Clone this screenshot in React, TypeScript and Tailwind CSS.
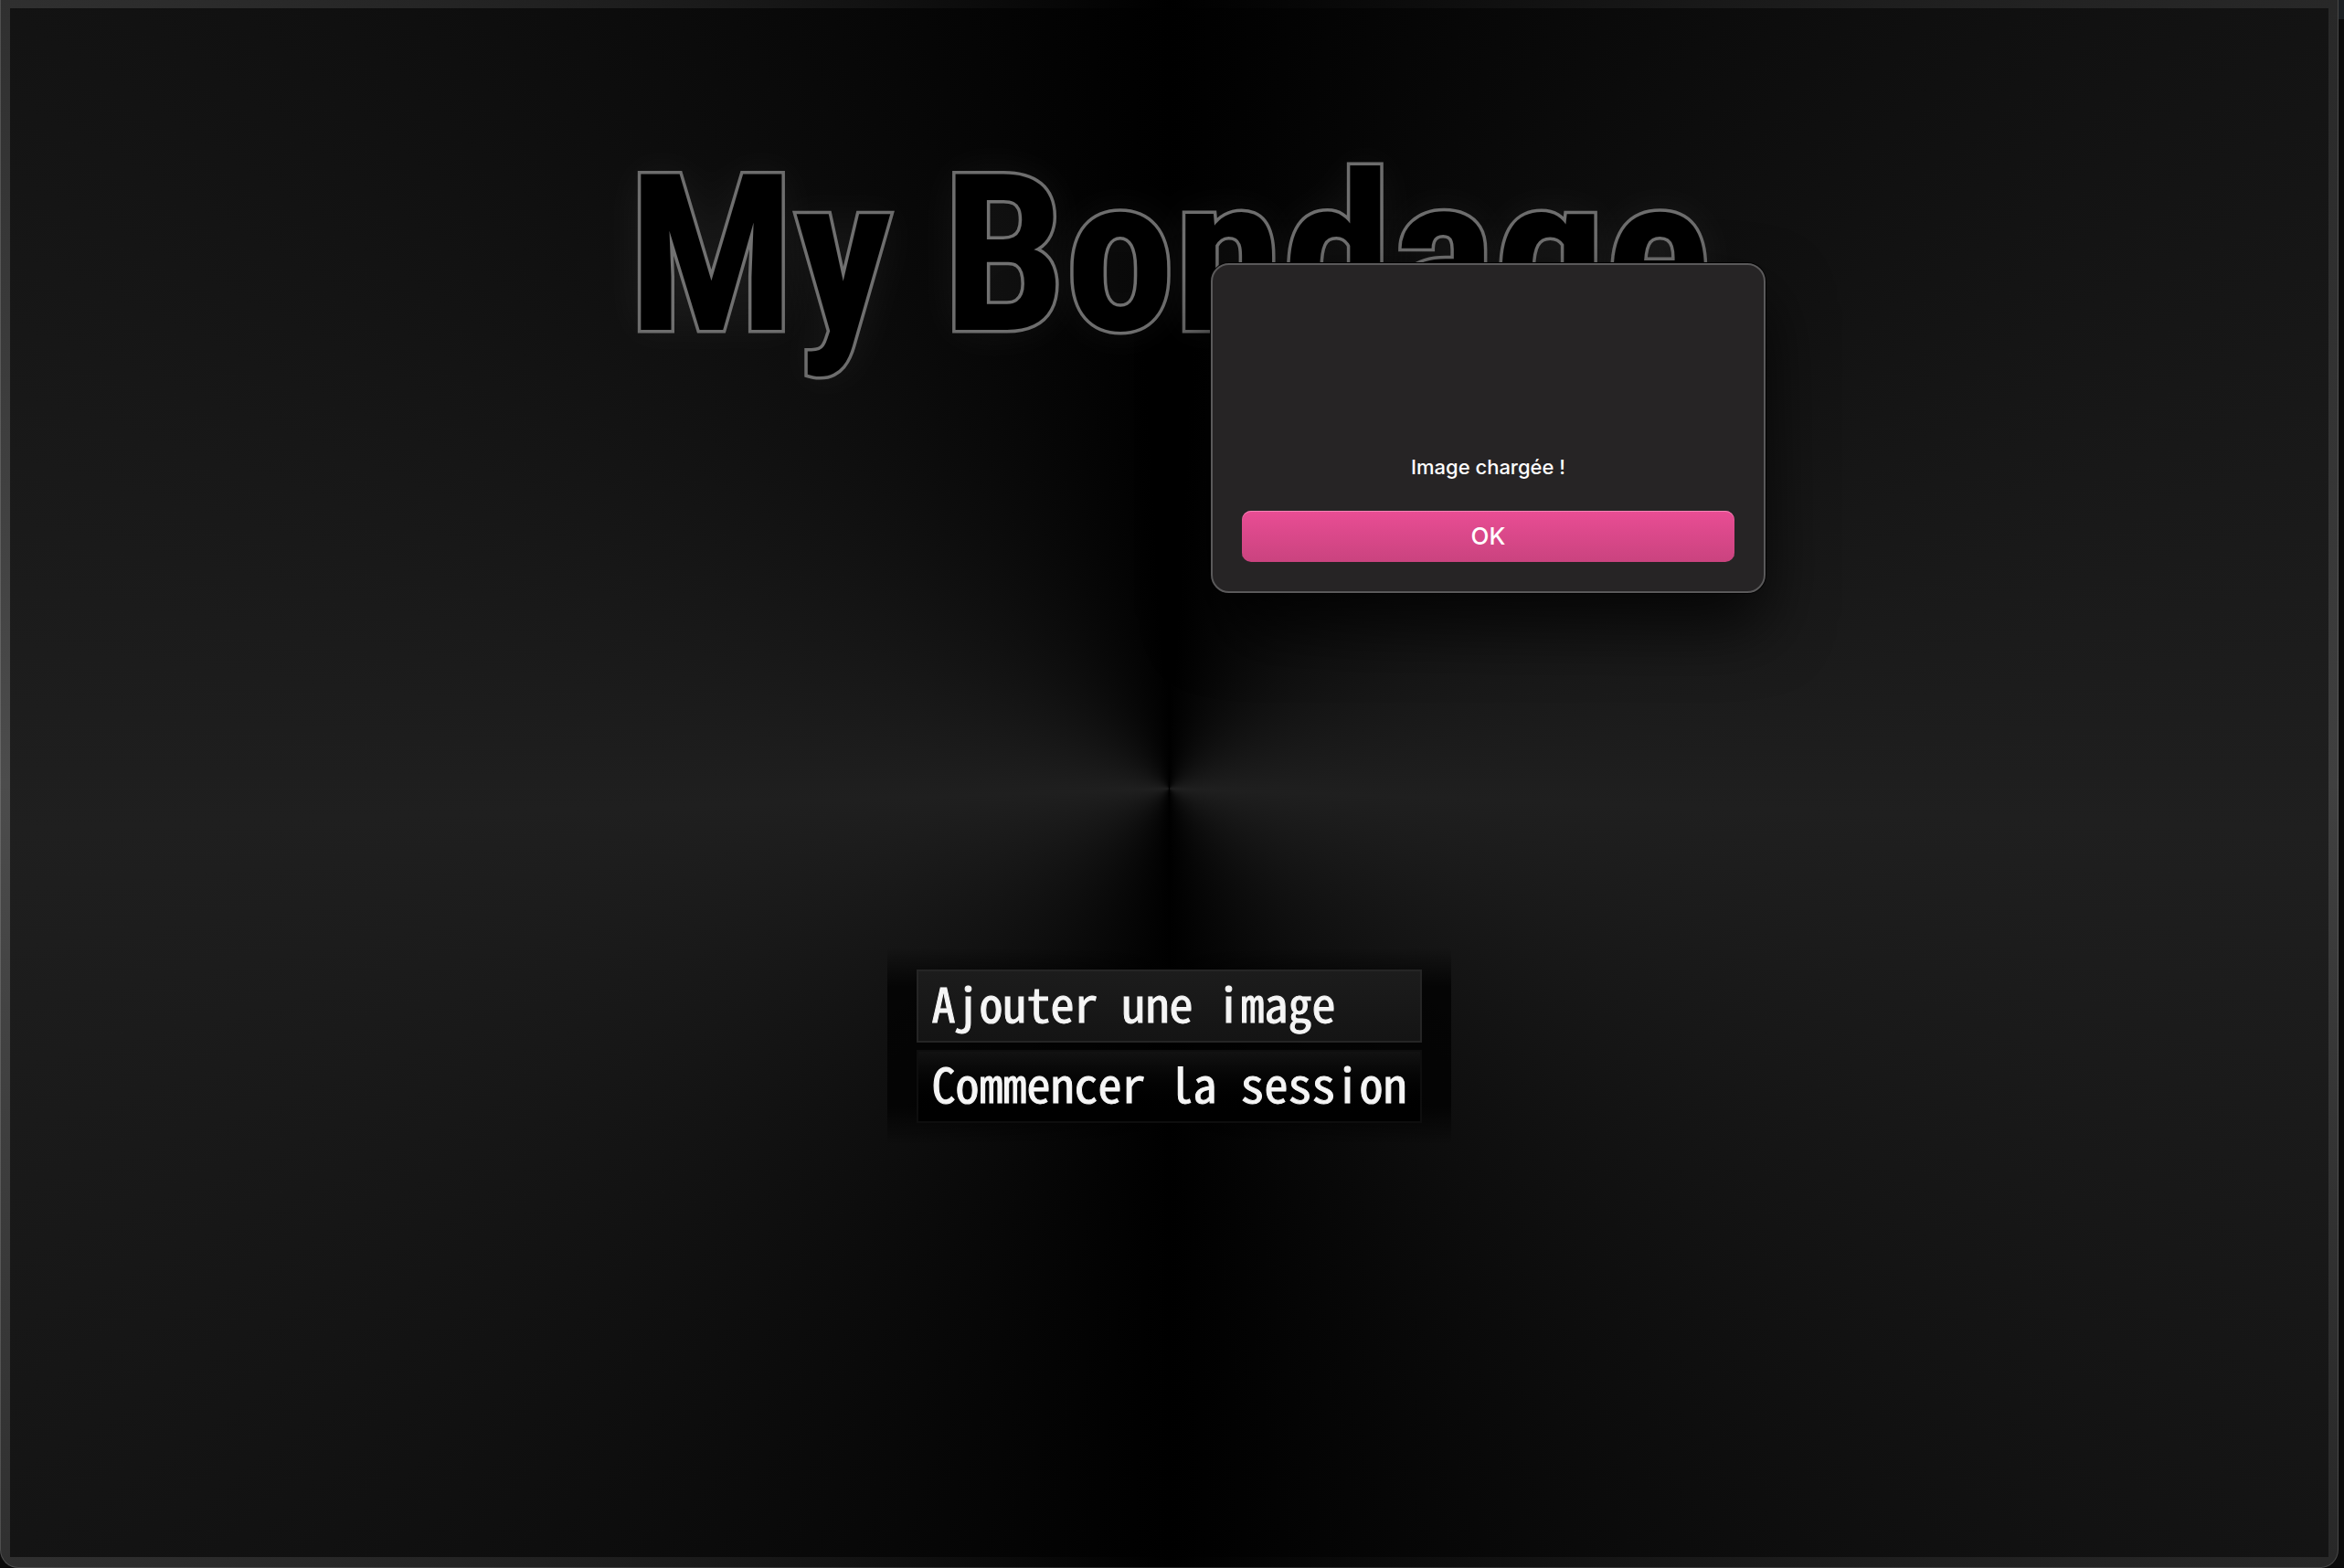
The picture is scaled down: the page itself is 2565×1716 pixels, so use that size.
import React, { useState } from 'react';

interface MenuItem {
    id: string;
    label: string;
    className: string;
}

const menuItems: MenuItem[] = [
    {
        id: 'add-image',
        label: 'Ajouter une image',
        className: 'border-[#252525] from-[#1c1c1c] to-[#141414]',
    },
    {
        id: 'start-session',
        label: 'Commencer la session',
        className: 'border-[#0e0e0e] from-[#121212] to-black',
    },
];

const MainMenu: React.FC = () => (
    <nav className="px-8 py-6 bg-[linear-gradient(to_bottom,transparent,rgba(0,0,0,0.75)_20%,rgba(0,0,0,0.75)_80%,transparent)]">
        <ul className="flex flex-col gap-2">
            {menuItems.map((item) => (
                <li key={item.id}>
                    <button
                        type="button"
                        className={`block w-full h-20 px-[14px] pb-2 border-2 bg-linear-to-b text-left text-[52px] leading-[64px] whitespace-nowrap text-[#f5f5f5] [-webkit-text-stroke:1px_#f5f5f5] font-['Noto_Sans_Mono_CJK_JP','Noto_Sans_CJK_JP',monospace] ${item.className}`}
                    >
                        {item.label}
                    </button>
                </li>
            ))}
        </ul>
    </nav>
);

const AlertDialog: React.FC<{ message: string; onClose: () => void }> = ({ message, onClose }) => (
    <div
        role="alertdialog"
        aria-label={message}
        className="absolute left-[1314px] top-[279px] flex flex-col justify-end w-[607px] h-[361px] px-8 pb-8 rounded-[20px] border-2 border-[#5a595a] bg-[#262425] shadow-[0_0_0_1px_#000,0_36px_70px_rgba(0,0,0,0.75)] font-['Inter',sans-serif] text-white"
    >
        <p className="mb-8 text-center text-[22px] leading-8 font-medium">{message}</p>
        <button
            type="button"
            onClick={onClose}
            className="w-full h-14 rounded-[10px] bg-linear-to-b from-[#e94d94] to-[#ca437f] shadow-[inset_0_1px_0_#f283b4] text-[26px] leading-8 font-medium"
        >
            OK
        </button>
    </div>
);

export default function App() {
    const [isAlertOpen, setIsAlertOpen] = useState(true);

    return (
        <div className="flex h-screen bg-[#0b0b0b]">
            {/* Window frame */}
            <div className="flex-1 flex rounded-b-[20px] border-x border-b border-white/15 bg-origin-border bg-[conic-gradient(#000,#404040_90deg,#000_180deg,#4c4c4c_270deg,#000)] px-[10px] pt-[9px] pb-[11px]">
                <main className="relative flex-1 flex flex-col items-center bg-[conic-gradient(at_50%_854px,#000,#1f1f1f_92deg,#000_180deg,#1f1f1f_268deg,#000)]">
                    <h1 className="mt-[120px] text-[240px] leading-[300px] font-bold text-black whitespace-nowrap font-['Roboto_Condensed','Open_Sans_Condensed',sans-serif] [-webkit-text-stroke:7px_#6b6b6b] [paint-order:stroke_fill] [text-shadow:0_0_50px_rgba(255,255,255,0.07)]">
                        My Bondage
                    </h1>
                    <div className="mt-[608px]">
                        <MainMenu />
                    </div>
                    {isAlertOpen && (
                        <AlertDialog message="Image chargée !" onClose={() => setIsAlertOpen(false)} />
                    )}
                </main>
            </div>
            {/* Desktop sliver beside the window */}
            <div className="w-[6px] bg-linear-to-b from-[#1c2023] from-[21px] to-[#0b0b0b] to-[21px]" />
        </div>
    );
}
